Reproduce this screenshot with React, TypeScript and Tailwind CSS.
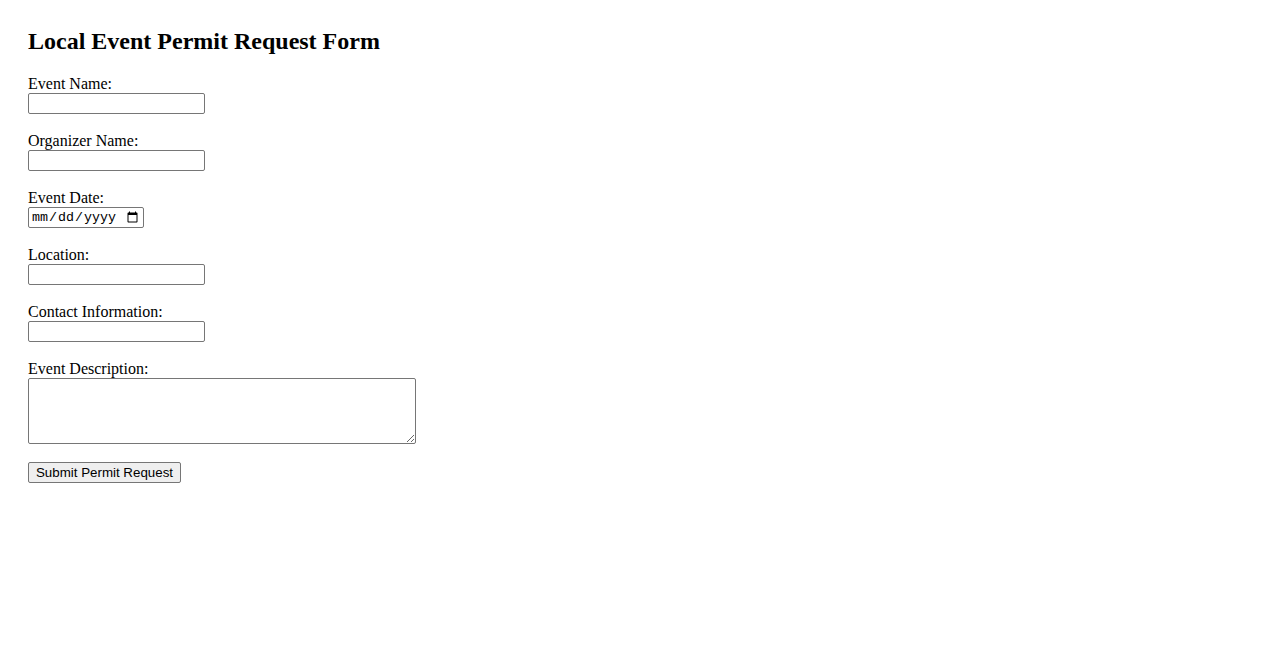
import React from "react";

const labelCls = "block text-[16px] leading-[18px] font-['Liberation_Serif',serif] text-black";
const inputCls =
  "block w-[177px] h-[21px] border border-[#767676] rounded-[2px] bg-white px-[2px] text-[13.33px] font-['Liberation_Sans',sans-serif] mb-[18px]";

export default function App() {
  return (
    <div className="min-h-[650px] bg-white pl-[28px] pt-[28px] font-['Liberation_Serif',serif] text-black">
      <h2 className="text-[24px] leading-[27px] font-bold mb-[20px]">Local Event Permit Request Form</h2>
      <form onSubmit={(e) => e.preventDefault()}>
        <label className={labelCls}>Event Name:</label>
        <input type="text" className={inputCls} />
        <label className={labelCls}>Organizer Name:</label>
        <input type="text" className={inputCls} />
        <label className={labelCls}>Event Date:</label>
        <input
          type="date"
          className="block w-[116px] h-[21px] border border-[#767676] rounded-[2px] bg-white pl-[2px] pr-[2px] text-[13.33px] font-['Liberation_Mono',monospace] mb-[18px]"
        />
        <label className={labelCls}>Location:</label>
        <input type="text" className={inputCls} />
        <label className={labelCls}>Contact Information:</label>
        <input type="text" className={inputCls} />
        <label className={labelCls}>Event Description:</label>
        <textarea className="block w-[388px] h-[66px] border border-[#767676] rounded-[2px] bg-white p-[2px] text-[13.33px] font-['Liberation_Mono',monospace] resize mb-[18px]" />
        <button
          type="submit"
          className="block w-[153px] h-[21px] border border-[#767676] rounded-[2px] bg-[#efefef] px-[6px] text-[13.33px] leading-[15px] font-['Liberation_Sans',sans-serif] text-black"
        >
          Submit Permit Request
        </button>
      </form>
    </div>
  );
}
